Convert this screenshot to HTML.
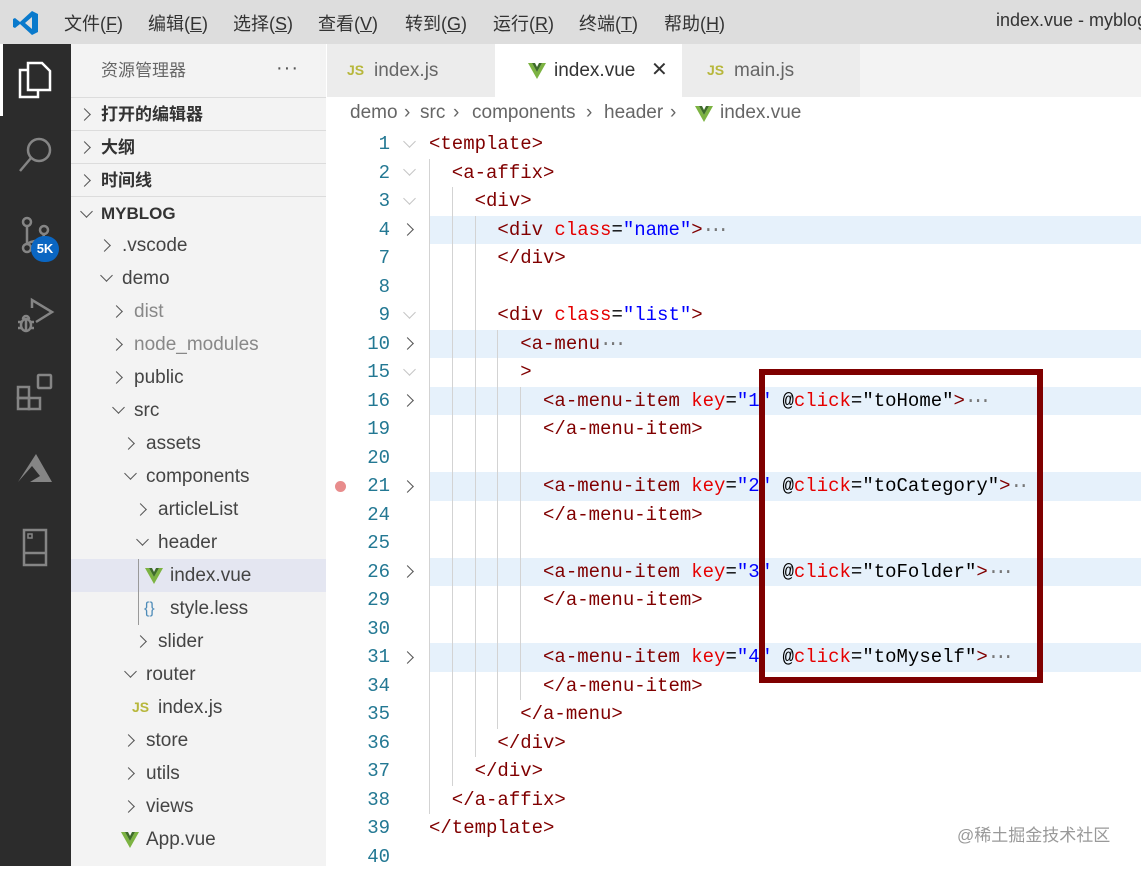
<!DOCTYPE html>
<html><head><meta charset="utf-8"><style>
*{margin:0;padding:0;box-sizing:border-box}
body{width:1141px;height:866px;overflow:hidden;position:relative;background:#fff;font-family:"Liberation Sans","Noto Sans CJK SC",sans-serif}
.a{position:absolute;white-space:nowrap}
#menu{left:0;top:0;width:1141px;height:44px;background:#dddddd}
#menu span{position:absolute;top:10px;font-size:18px;color:#333}
#act{left:0;top:44px;width:71px;height:822px;background:#2c2c2c}
#side{left:71px;top:44px;width:255px;height:822px;background:#f3f3f3}
.sr{position:absolute;left:0;width:255px;height:33px;font-size:19px;color:#444;line-height:33px}
.chv{position:absolute;width:9px;height:9px;border-right:1.5px solid #555;border-bottom:1.5px solid #555}
.cr{transform:rotate(-45deg)}
.cd{transform:rotate(45deg)}
.sec{font-weight:bold;font-size:17px;color:#333;border-top:1px solid #dcdcdc}
#tabs{left:327px;top:44px;width:814px;height:53px;background:#f3f3f3}
.tab{position:absolute;top:0;height:53px;font-size:19px;line-height:53px;color:#666}
.js{color:#b7b73b;font-weight:bold;font-size:14px;font-family:"Liberation Sans",sans-serif}
.vi{position:absolute;width:18px;height:16px}
.bc{position:absolute;top:102px;font-size:19px;color:#666;white-space:nowrap}
.ln{position:absolute;left:330px;width:60px;text-align:right;color:#237893;font-family:"Liberation Mono",monospace;font-size:19px;height:28.5px;line-height:28.5px}
.cl{position:absolute;left:429px;height:28.5px;line-height:28.5px;font-family:"Liberation Mono",monospace;font-size:19px;color:#800000;white-space:pre}
.hl{position:absolute;left:429px;width:712px;height:28.5px;background:#e6f1fb}
.at{color:#e50000}.v{color:#0000ff}.k{color:#000}.el{color:#777;font-size:19px;letter-spacing:-4px}
.g{position:absolute;width:1px;background:#d3d3d3}
</style></head><body>
<svg width="0" height="0" style="position:absolute"><defs><symbol id="vue" viewBox="0 0 18 16"><path d="M0 0 H4 L9 9 L14 0 H18 L9 16 Z" fill="#7cb342"/><path d="M4 0 H7 L9 4 L11 0 H14 L9 9 Z" fill="#3e6b2a"/></symbol></defs></svg>
<div class="a" id="menu">
<svg style="position:absolute;left:13px;top:10px" width="26" height="26" viewBox="0 0 26 26"><path d="M19 1 L25 4 V22 L19 25 L7 14 L2 18 L0 17 V9 L2 8 L7 12 Z M19 7 L12 13 L19 19 Z" fill="#0a7acc"/></svg>
<span style="left:64px">文件(<u>F</u>)</span><span style="left:148px">编辑(<u>E</u>)</span><span style="left:233px">选择(<u>S</u>)</span><span style="left:318px">查看(<u>V</u>)</span><span style="left:405px">转到(<u>G</u>)</span><span style="left:493px">运行(<u>R</u>)</span><span style="left:579px">终端(<u>T</u>)</span><span style="left:664px">帮助(<u>H</u>)</span><span style="left:996px">index.vue - myblog</span>
</div>
<div class="a" id="act">
<div style="position:absolute;left:0;top:0;width:3px;height:72px;background:#fff"></div>
<svg style="position:absolute;left:16px;top:16px" width="38" height="40" viewBox="0 0 38 40" fill="none" stroke="#fff" stroke-width="2.5"><path d="M12 3 H26 L34 11 V30 H12 Z"/><path d="M12 10 H4 V37 H22 V30"/></svg>
<svg style="position:absolute;left:18px;top:92px" width="36" height="38" viewBox="0 0 36 38" fill="none" stroke="#858585" stroke-width="2.5"><circle cx="21" cy="14" r="11"/><path d="M13 22 L2 35"/></svg>
<svg style="position:absolute;left:20px;top:172px" width="32" height="40" viewBox="0 0 32 40" fill="none" stroke="#858585" stroke-width="2.5"><circle cx="7" cy="6" r="4"/><circle cx="7" cy="32" r="4"/><circle cx="24" cy="14" r="4"/><path d="M7 10 V28 M24 18 C24 26 10 24 8 28"/></svg>
<div style="position:absolute;left:31px;top:192px;width:28px;height:26px;border-radius:13px;background:#0a66c2;color:#fff;font-weight:bold;font-size:13px;line-height:26px;text-align:center">5K</div>
<svg style="position:absolute;left:16px;top:252px" width="40" height="40" viewBox="0 0 40 40" fill="none" stroke="#858585" stroke-width="2.5"><path d="M16 12 V4 L36 16 L20 26"/><ellipse cx="10" cy="29" rx="5" ry="6"/><path d="M7 23 A3 3 0 0 1 13 23 M2 26 H5 M2 32 H5 M15 26 H18 M15 32 H18 M10 24 V35"/></svg>
<svg style="position:absolute;left:16px;top:328px" width="40" height="40" viewBox="0 0 40 40" fill="none" stroke="#858585" stroke-width="2.5"><rect x="2" y="15" width="11" height="11"/><rect x="13" y="26" width="11" height="11"/><rect x="2" y="26" width="11" height="11"/><rect x="22" y="3" width="13" height="13" rx="1"/></svg>
<svg style="position:absolute;left:16px;top:408px" width="38" height="34" viewBox="0 0 38 34"><path d="M20 2 L36 30 H14 L24 24 L16 14 L2 30 Z" fill="#858585"/></svg>
<svg style="position:absolute;left:20px;top:484px" width="30" height="40" viewBox="0 0 30 40" fill="none" stroke="#858585" stroke-width="2.5"><rect x="4" y="2" width="22" height="35"/><path d="M4 25 H26"/><rect x="8" y="6" width="4" height="4" stroke-width="1.5"/></svg>
</div>
<div class="a" id="side">
<div class="sr" style="top:10px;left:30px;font-size:17px;color:#666">资源管理器</div>
<div class="sr" style="top:8px;left:205px;font-size:20px;color:#555;letter-spacing:1px">···</div>
<div class="sr sec" style="top:53px"><i class="chv cr" style="left:9px;top:12px"></i><span style="position:absolute;left:30px">打开的编辑器</span></div>
<div class="sr sec" style="top:86px"><i class="chv cr" style="left:9px;top:12px"></i><span style="position:absolute;left:30px">大纲</span></div>
<div class="sr sec" style="top:119px"><i class="chv cr" style="left:9px;top:12px"></i><span style="position:absolute;left:30px">时间线</span></div>
<div class="sr sec" style="top:152px"><i class="chv cd" style="left:11px;top:10px"></i><span style="position:absolute;left:30px">MYBLOG</span></div>
<div class="sr" style="top:515px;background:#e4e6f1"></div>
<div style="position:absolute;left:67px;top:515px;width:1px;height:66px;background:#999"></div>
<div class="sr" style="top:185px"><i class="chv cr" style="left:29px;top:12px"></i><span style="position:absolute;left:51px">.vscode</span></div>
<div class="sr" style="top:218px"><i class="chv cd" style="left:31px;top:9px"></i><span style="position:absolute;left:51px">demo</span></div>
<div class="sr" style="top:251px;color:#888"><i class="chv cr" style="left:41px;top:12px"></i><span style="position:absolute;left:63px">dist</span></div>
<div class="sr" style="top:284px;color:#888"><i class="chv cr" style="left:41px;top:12px"></i><span style="position:absolute;left:63px">node_modules</span></div>
<div class="sr" style="top:317px"><i class="chv cr" style="left:41px;top:12px"></i><span style="position:absolute;left:63px">public</span></div>
<div class="sr" style="top:350px"><i class="chv cd" style="left:43px;top:9px"></i><span style="position:absolute;left:63px">src</span></div>
<div class="sr" style="top:383px"><i class="chv cr" style="left:53px;top:12px"></i><span style="position:absolute;left:75px">assets</span></div>
<div class="sr" style="top:416px"><i class="chv cd" style="left:55px;top:9px"></i><span style="position:absolute;left:75px">components</span></div>
<div class="sr" style="top:449px"><i class="chv cr" style="left:65px;top:12px"></i><span style="position:absolute;left:87px">articleList</span></div>
<div class="sr" style="top:482px"><i class="chv cd" style="left:67px;top:9px"></i><span style="position:absolute;left:87px">header</span></div>
<div class="sr" style="top:515px"><svg class="vi" style="left:74px;top:9px"><use href="#vue"/></svg><span style="position:absolute;left:99px">index.vue</span></div>
<div class="sr" style="top:548px"><span style="position:absolute;left:73px;color:#4d8bb8;font-size:16px">{}</span><span style="position:absolute;left:99px">style.less</span></div>
<div class="sr" style="top:581px"><i class="chv cr" style="left:65px;top:12px"></i><span style="position:absolute;left:87px">slider</span></div>
<div class="sr" style="top:614px"><i class="chv cd" style="left:55px;top:9px"></i><span style="position:absolute;left:75px">router</span></div>
<div class="sr" style="top:647px"><span class="js" style="position:absolute;left:61px">JS</span><span style="position:absolute;left:87px">index.js</span></div>
<div class="sr" style="top:680px"><i class="chv cr" style="left:53px;top:12px"></i><span style="position:absolute;left:75px">store</span></div>
<div class="sr" style="top:713px"><i class="chv cr" style="left:53px;top:12px"></i><span style="position:absolute;left:75px">utils</span></div>
<div class="sr" style="top:746px"><i class="chv cr" style="left:53px;top:12px"></i><span style="position:absolute;left:75px">views</span></div>
<div class="sr" style="top:779px"><svg class="vi" style="left:50px;top:9px"><use href="#vue"/></svg><span style="position:absolute;left:75px">App.vue</span></div>
</div>
<div class="a" id="tabs">
<div class="tab" style="left:0;width:168px;background:#ececec"><span class="js" style="position:absolute;left:20px">JS</span><span style="position:absolute;left:47px">index.js</span></div>
<div class="tab" style="left:168px;width:187px;background:#fff;color:#333"><svg class="vi" style="left:33px;top:19px"><use href="#vue"/></svg><span style="position:absolute;left:59px">index.vue</span><span style="position:absolute;left:156px;font-size:20px">✕</span></div>
<div class="tab" style="left:355px;width:178px;background:#ececec"><span class="js" style="position:absolute;left:25px">JS</span><span style="position:absolute;left:52px">main.js</span></div>
</div>
<span class="bc" style="left:350px">demo</span><span class="bc" style="left:404px">›</span>
<span class="bc" style="left:420px">src</span><span class="bc" style="left:453px">›</span>
<span class="bc" style="left:472px">components</span><span class="bc" style="left:586px">›</span>
<span class="bc" style="left:604px">header</span><span class="bc" style="left:670px">›</span>
<svg class="vi" style="left:695px;top:106px"><use href="#vue"/></svg>
<span class="bc" style="left:720px">index.vue</span>

<div class="hl" style="top:215.5px"></div><div class="hl" style="top:329.5px"></div><div class="hl" style="top:386.5px"></div><div class="hl" style="top:472px"></div><div class="hl" style="top:557.5px"></div><div class="hl" style="top:643px"></div>

<div class="g" style="left:429px;top:158.5px;height:655.5px"></div>
<div class="g" style="left:452px;top:187px;height:598.5px"></div>
<div class="g" style="left:475px;top:215.5px;height:541.5px"></div>
<div class="g" style="left:497px;top:329.5px;height:399px"></div>
<div class="g" style="left:520px;top:386.5px;height:313.5px"></div>

<div class="ln" style="top:130px">1</div><div class="ln" style="top:158.5px">2</div><div class="ln" style="top:187px">3</div><div class="ln" style="top:215.5px">4</div><div class="ln" style="top:244px">7</div><div class="ln" style="top:272.5px">8</div><div class="ln" style="top:301px">9</div><div class="ln" style="top:329.5px">10</div><div class="ln" style="top:358px">15</div><div class="ln" style="top:386.5px">16</div><div class="ln" style="top:415px">19</div><div class="ln" style="top:443.5px">20</div><div class="ln" style="top:472px">21</div><div class="ln" style="top:500.5px">24</div><div class="ln" style="top:529px">25</div><div class="ln" style="top:557.5px">26</div><div class="ln" style="top:586px">29</div><div class="ln" style="top:614.5px">30</div><div class="ln" style="top:643px">31</div><div class="ln" style="top:671.5px">34</div><div class="ln" style="top:700px">35</div><div class="ln" style="top:728.5px">36</div><div class="ln" style="top:757px">37</div><div class="ln" style="top:785.5px">38</div><div class="ln" style="top:814px">39</div><div class="ln" style="top:842.5px">40</div>

<div style="position:absolute;left:335px;top:481px;width:11px;height:11px;border-radius:50%;background:#e88c8c"></div>

<i class="chv cd" style="left:405px;top:137px;border-color:#c5c5c5"></i>
<i class="chv cd" style="left:405px;top:165px;border-color:#c5c5c5"></i>
<i class="chv cd" style="left:405px;top:194px;border-color:#c5c5c5"></i>
<i class="chv cd" style="left:405px;top:308px;border-color:#c5c5c5"></i>
<i class="chv cd" style="left:405px;top:365px;border-color:#c5c5c5"></i>
<i class="chv cr" style="left:403px;top:225px"></i>
<i class="chv cr" style="left:403px;top:339px"></i>
<i class="chv cr" style="left:403px;top:396px"></i>
<i class="chv cr" style="left:403px;top:482px"></i>
<i class="chv cr" style="left:403px;top:567px"></i>
<i class="chv cr" style="left:403px;top:653px"></i>

<div class="cl" style="top:130px">&lt;template&gt;</div>
<div class="cl" style="top:158.5px">  &lt;a-affix&gt;</div>
<div class="cl" style="top:187px">    &lt;div&gt;</div>
<div class="cl" style="top:215.5px">      &lt;div <span class="at">class</span><span class="k">=</span><span class="v">"name"</span>&gt;<span class="el">···</span></div>
<div class="cl" style="top:244px">      &lt;/div&gt;</div>
<div class="cl" style="top:301px">      &lt;div <span class="at">class</span><span class="k">=</span><span class="v">"list"</span>&gt;</div>
<div class="cl" style="top:329.5px">        &lt;a-menu<span class="el">···</span></div>
<div class="cl" style="top:358px">        &gt;</div>
<div class="cl" style="top:386.5px">          &lt;a-menu-item <span class="at">key</span><span class="k">=</span><span class="v">"1"</span> <span class="k">@</span><span class="at">click</span><span class="k">="toHome"</span>&gt;<span class="el">···</span></div>
<div class="cl" style="top:415px">          &lt;/a-menu-item&gt;</div>
<div class="cl" style="top:472px">          &lt;a-menu-item <span class="at">key</span><span class="k">=</span><span class="v">"2"</span> <span class="k">@</span><span class="at">click</span><span class="k">="toCategory"</span>&gt;<span class="el">··</span></div>
<div class="cl" style="top:500.5px">          &lt;/a-menu-item&gt;</div>
<div class="cl" style="top:557.5px">          &lt;a-menu-item <span class="at">key</span><span class="k">=</span><span class="v">"3"</span> <span class="k">@</span><span class="at">click</span><span class="k">="toFolder"</span>&gt;<span class="el">···</span></div>
<div class="cl" style="top:586px">          &lt;/a-menu-item&gt;</div>
<div class="cl" style="top:643px">          &lt;a-menu-item <span class="at">key</span><span class="k">=</span><span class="v">"4"</span> <span class="k">@</span><span class="at">click</span><span class="k">="toMyself"</span>&gt;<span class="el">···</span></div>
<div class="cl" style="top:671.5px">          &lt;/a-menu-item&gt;</div>
<div class="cl" style="top:700px">        &lt;/a-menu&gt;</div>
<div class="cl" style="top:728.5px">      &lt;/div&gt;</div>
<div class="cl" style="top:757px">    &lt;/div&gt;</div>
<div class="cl" style="top:785.5px">  &lt;/a-affix&gt;</div>
<div class="cl" style="top:814px">&lt;/template&gt;</div>

<div style="position:absolute;left:759px;top:369px;width:284px;height:314px;border:6px solid #7f0000"></div>
<div class="a" style="left:957px;top:821px;font-size:17px;color:#999">@稀土掘金技术社区</div>
</body></html>
